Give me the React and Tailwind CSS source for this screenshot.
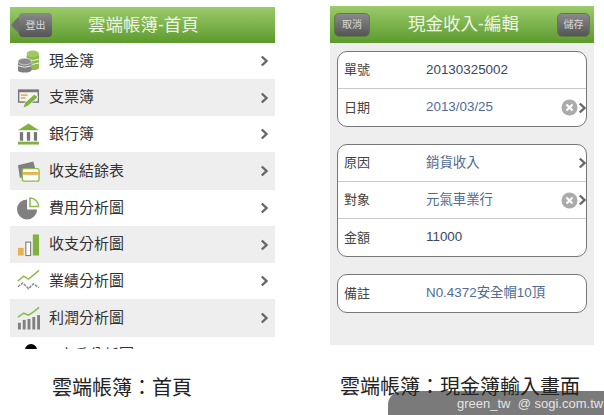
const cjk = { fontFamily: '"Liberation Sans", "Noto Sans CJK TC", sans-serif' };

const Chevron = ({ className = "" }) => (
  <svg width="9" height="12" viewBox="0 0 9 12" className={className}>
    <path d="M1.8 1.5 L6.5 6 L1.8 10.5" fill="none" stroke="#666" strokeWidth="2.4" />
  </svg>
);

const Clear = () => (
  <svg width="17" height="17" viewBox="0 0 17 17">
    <circle cx="8.5" cy="8.5" r="8" fill="#ababab" />
    <path d="M5.5 5.5 L11.5 11.5 M11.5 5.5 L5.5 11.5" stroke="#fff" strokeWidth="2.2" />
  </svg>
);

const Coins = () => (
  <svg width="23" height="24" viewBox="0 0 24 24">
    <rect x="10" y="5" width="13" height="14" rx="2" fill="#8dbb4e" />
    <ellipse cx="16.5" cy="4.5" rx="6.5" ry="3.5" fill="#9fca62" />
    <path d="M10 10 Q16.5 13 23 10 M10 14 Q16.5 17 23 14" fill="none" stroke="#fff" strokeWidth="0.9" />
    <ellipse cx="16.5" cy="19" rx="6.5" ry="2.5" fill="#8dbb4e" />
    <rect x="1" y="13" width="14" height="9" fill="#808080" />
    <ellipse cx="8" cy="12.5" rx="7" ry="3.5" fill="#8c8c8c" stroke="#fff" strokeWidth="0.6" />
    <ellipse cx="8" cy="22" rx="7" ry="2" fill="#808080" />
    <path d="M1 17 Q8 20 15 17" fill="none" stroke="#fff" strokeWidth="0.9" />
  </svg>
);

const Check = () => (
  <svg width="23" height="24" viewBox="0 0 24 24">
    <rect x="1" y="3" width="22" height="14" fill="#777" />
    <rect x="2.5" y="6" width="19" height="9.5" fill="#f4f4f4" />
    <path d="M4 9 H11" stroke="#e8a63a" strokeWidth="1.5" />
    <path d="M4 12 H9" stroke="#e8a63a" strokeWidth="1.5" />
    <path d="M6 23 L8 17 L18 8 L22 11 L12 20 Z" fill="#7fb240" stroke="#fff" strokeWidth="0.8" />
  </svg>
);

const Bank = () => (
  <svg width="23" height="24" viewBox="0 0 24 24">
    <path d="M12 1 L23 8 H1 Z" fill="#7fb240" />
    <rect x="3" y="10" width="3.4" height="9" fill="#777" />
    <rect x="10.3" y="10" width="3.4" height="9" fill="#777" />
    <rect x="17.6" y="10" width="3.4" height="9" fill="#777" />
    <rect x="1" y="20" width="22" height="3" fill="#7fb240" />
  </svg>
);

const Cards = () => (
  <svg width="23" height="24" viewBox="0 0 24 24">
    <path d="M1 6 L17 2 L19 9 L6 12 L5 19 H3 Z" fill="#808080" />
    <rect x="5.5" y="9.5" width="17.5" height="13" rx="2" fill="#fff" stroke="#8dbb4e" strokeWidth="1.4" />
    <rect x="6" y="13" width="16.5" height="3" fill="#eab04c" />
  </svg>
);

const Pie = () => (
  <svg width="23" height="24" viewBox="0 0 24 24">
    <path d="M10.5 4.5 V13.5 H21 A10.5 10.5 0 1 1 10.5 3 Z" fill="#808080" />
    <path d="M13.5 1.5 A9 9 0 0 1 22.5 10.5 H13.5 Z" fill="#fff" stroke="#8dbb4e" strokeWidth="1.6" />
  </svg>
);

const Bars = () => (
  <svg width="23" height="24" viewBox="0 0 24 24">
    <rect x="1" y="15" width="6" height="8" fill="#eab04c" />
    <rect x="9.2" y="9" width="5" height="14" fill="#fff" stroke="#808080" strokeWidth="1.2" />
    <rect x="16.5" y="1" width="6.5" height="22" fill="#7fb240" />
  </svg>
);

const Lines = () => (
  <svg width="23" height="24" viewBox="0 0 24 24">
    <path d="M1 12 L7 7 L12 10 L18 5 L23 1" fill="none" stroke="#8dbb4e" strokeWidth="1.6" />
    <path d="M1 18 L6 14 L12 20 L17 15 L23 19" fill="none" stroke="#8c8c98" strokeWidth="1.6" strokeDasharray="3 1" />
  </svg>
);

const Profit = () => (
  <svg width="23" height="24" viewBox="0 0 24 24">
    <path d="M1 11 L7 7 L12 9 L18 5 L23 1" fill="none" stroke="#8dbb4e" strokeWidth="1.6" />
    <rect x="1" y="17" width="3" height="7" fill="#808080" />
    <rect x="6" y="14" width="3" height="10" fill="#808080" />
    <rect x="11" y="13" width="3" height="11" fill="#808080" />
    <rect x="16" y="11" width="3" height="13" fill="#808080" />
    <rect x="21" y="9" width="3" height="15" fill="#808080" />
  </svg>
);

const menu = [
  { label: "現金簿", Icon: Coins, h: "h-[36px]" },
  { label: "支票簿", Icon: Check, h: "h-[37px]" },
  { label: "銀行簿", Icon: Bank, h: "h-[36px]" },
  { label: "收支結餘表", Icon: Cards, h: "h-[38px]" },
  { label: "費用分析圖", Icon: Pie, h: "h-[36px]" },
  { label: "收支分析圖", Icon: Bars, h: "h-[37px]" },
  { label: "業績分析圖", Icon: Lines, h: "h-[36px]" },
  { label: "利潤分析圖", Icon: Profit, h: "h-[38px]" },
];

const NavButton = ({ children, className = "" }) => (
  <div
    className={`flex items-center justify-center bg-gradient-to-b from-[#8a8a8a] to-[#555] border border-[#5c7f3a] text-[10px] text-[#d8d8d8] ${className}`}
  >
    {children}
  </div>
);

const Field = ({ label, value, blue, clear, arrow, last }) => (
  <div className={`flex items-center h-[37px] pl-[6px] ${last ? "" : "border-b border-[#c8c8c8]"}`}>
    <span className="w-[82px] text-[13px] text-[#444]">{label}</span>
    <span className={`flex-1 text-[13.4px] ${blue ? "text-[#4f6c96]" : "text-[#3a4763]"}`}>{value}</span>
    {clear && <Clear />}
    {arrow && <Chevron className="mr-[-1px]" />}
  </div>
);

export default function App() {
  return (
    <div className="relative w-[604px] h-[415px] bg-white overflow-hidden" style={cjk}>
      {/* watermark */}
      <div className="absolute left-[388px] top-[391px] w-[216px] h-[24px] rounded-tl-[14px] bg-[#7a7a7a] pl-[69px] text-[13px] leading-[26px] text-[#e4e4e4] whitespace-nowrap">
        green_tw&nbsp;&nbsp;@ sogi.com.tw
      </div>

      <div className="relative flex pt-[6px]">
        {/* HOME */}
        <div className="ml-[10px] w-[265px] mt-[1px]">
          <div className="h-[36px] bg-gradient-to-b from-[#9ccb6a] to-[#5c9a2c] flex items-center relative">
            <div className="ml-[4px] w-[38px] h-[24px] relative">
              <div className="absolute left-0 top-[4px] w-[16px] h-[16px] rotate-45 bg-[#6e6e6e] rounded-[2px]" />
              <NavButton className="absolute left-[5px] top-0 w-[33px] h-[24px] rounded-[4px] border-0">登出</NavButton>
            </div>
            <span className="ml-[36px] text-[17.5px] text-[#eef6e4]">雲端帳簿-首頁</span>
          </div>
          <div className="h-[306px] overflow-hidden">
            {menu.map(({ label, Icon, h }, i) => (
              <div key={label} className={`flex items-center ${h} pl-[7px] pr-[6px] ${i % 2 ? "bg-[#eeeeee]" : "bg-white"}`}>
                <Icon />
                <span className="ml-[9px] flex-1 text-[15px] text-[#333]">{label}</span>
                <Chevron />
              </div>
            ))}
            <div className="flex pl-[15px] pt-[7px] bg-white">
              <div className="w-[12px] h-[12px] rounded-full bg-black" />
              <span className="ml-[22px] text-[15px] text-[#333]">客戶分析圖</span>
            </div>
          </div>
          <div className="mt-[27px] pl-[42px] text-[20px] leading-[24px] text-[#222]">雲端帳簿：首頁</div>
        </div>

        {/* EDIT */}
        <div className="ml-[55px] w-[264px]">
          <div className="h-[37px] bg-gradient-to-b from-[#9ccb6a] to-[#5c9a2c] flex items-center justify-between px-[4px]">
            <NavButton className="w-[36px] h-[24px] rounded-[5px]">取消</NavButton>
            <span className="text-[17.5px] text-[#eef6e4]">現金收入-編輯</span>
            <NavButton className="w-[33px] h-[24px] rounded-[5px]">儲存</NavButton>
          </div>
          <div className="h-[302px] bg-[#eeeeee] px-[7px] pt-[8px] flex flex-col gap-[17px]">
            <div className="bg-white border border-[#777] rounded-[10px]">
              <Field label="單號" value="20130325002" />
              <Field label="日期" value="2013/03/25" blue clear arrow last />
            </div>
            <div className="bg-white border border-[#777] rounded-[10px]">
              <Field label="原因" value="銷貨收入" blue arrow />
              <Field label="對象" value="元氣車業行" blue clear arrow />
              <Field label="金額" value="11000" last />
            </div>
            <div className="bg-white border border-[#777] rounded-[10px]">
              <Field label="備註" value="N0.4372安全帽10頂" blue last />
            </div>
          </div>
          <div className="mt-[30px] ml-[10px] text-[20px] leading-[24px] text-[#222] whitespace-nowrap">雲端帳簿：現金簿輸入畫面</div>
        </div>
      </div>
    </div>
  );
}
